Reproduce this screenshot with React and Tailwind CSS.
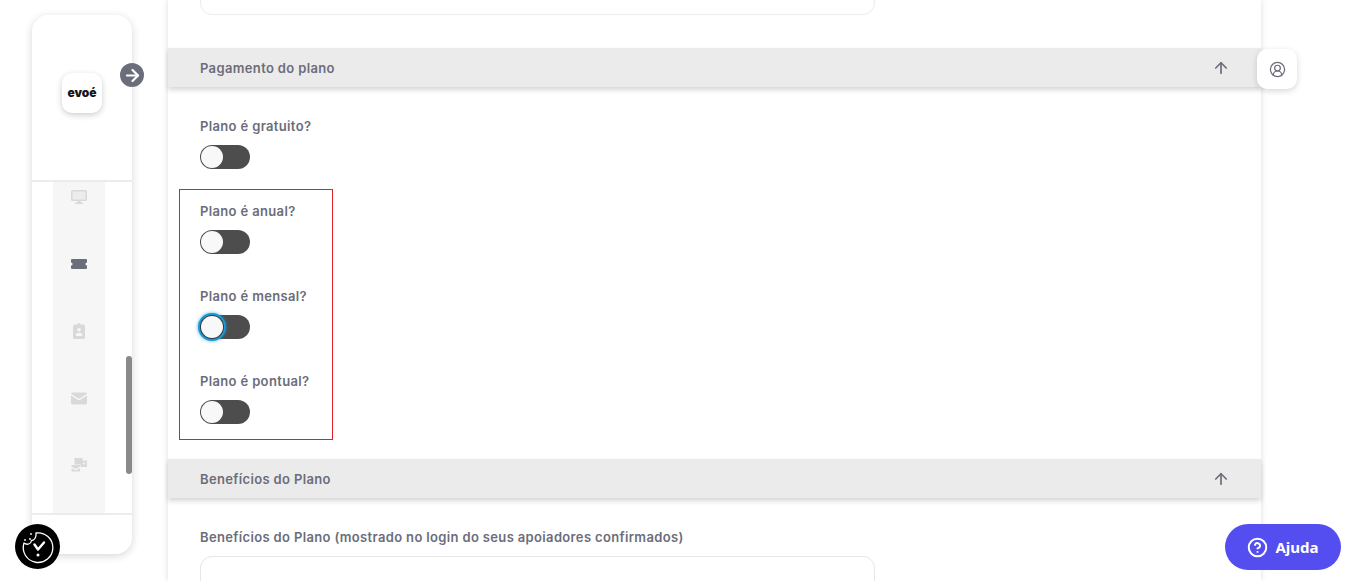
import React from 'react';
import { ArrowRight, ArrowUp, CircleUserRound, CircleHelp } from 'lucide-react';

const labelClass = "font-['Inter',sans-serif] text-[13px] font-semibold tracking-[0.35px] text-[#6b6d7a]";

const SectionHeader = ({ title }) => (
  <div className="flex h-[39px] items-center justify-between bg-[#ebebeb] pl-8 pr-[31px] shadow-[0_3px_5px_rgba(0,0,0,0.16)]">
    <span className={`${labelClass} pt-[3px]`}>{title}</span>
    <ArrowUp size={18} strokeWidth={2.25} className="text-[#6b6d7a]" />
  </div>
);

const Toggle = ({ focused }) => (
  <div className="relative h-6 w-[50px] rounded-full bg-[#4d4d4d]">
    <div
      className={`absolute left-px top-px h-[22px] w-[22px] rounded-full bg-[#f8f8f8] ${
        focused ? 'shadow-[0_0_0_1px_#3a3a3a,0_0_0_3px_#1a97d5,0_0_3px_4px_rgba(26,151,213,0.45)]' : ''
      }`}
    />
  </div>
);

const ToggleField = ({ label, focused }) => (
  <div className="flex flex-col">
    <label className={`${labelClass} h-[16px] leading-[16px]`}>{label}</label>
    <div className="mt-[11px]">
      <Toggle focused={focused} />
    </div>
  </div>
);

const navIcons = [
  <svg key="monitor" viewBox="0 0 16 16" className="h-4 w-4 fill-[#d9d9d9]">
    <path fillRule="evenodd" d="M1.500 1h13A1.500 1.500 0 0 1 16 2.500v8a1.500 1.500 0 0 1-1.500 1.500h-13A1.500 1.500 0 0 1 0 10.500v-8A1.500 1.500 0 0 1 1.500 1zM1.800 2.800v7.400h12.400V2.800z" />
    <path d="M1.800 2.800h12.400v7.400H1.800z" fill="#ececec" />
    <path d="M6.500 12h3l.4 1.500H12V15H4v-1.500h2.100z" />
  </svg>,
  <svg key="ticket" viewBox="0 0 16 16" className="h-4 w-4 fill-[#6b6d7a]">
    <path d="M1 3h14a1 1 0 0 1 1 1v2.400a1.600 1.600 0 0 0 0 3.200V12a1 1 0 0 1-1 1H1a1 1 0 0 1-1-1V9.600a1.600 1.600 0 0 0 0-3.200V4a1 1 0 0 1 1-1z" />
  </svg>,
  <svg key="badge" viewBox="0 0 16 16" className="h-4 w-4 fill-[#d9d9d9]">
    <path fillRule="evenodd" d="M3.500 1.500h2.700a1.900 1.900 0 0 1 3.600 0h2.700A1.500 1.500 0 0 1 14 3v11.500a1.500 1.500 0 0 1-1.500 1.500h-9A1.500 1.500 0 0 1 2 14.500V3a1.500 1.500 0 0 1 1.500-1.500zM8 5a1.800 1.800 0 1 0 0 3.600A1.800 1.800 0 0 0 8 5zM4.800 13h6.400v-1.300c0-1-1.500-1.900-3.200-1.900s-3.200.9-3.200 1.900z" />
  </svg>,
  <svg key="mail" viewBox="0 0 16 16" className="h-4 w-4 fill-[#d9d9d9]">
    <path d="M1.500 2.500h13c.8 0 1.400.5 1.500 1.200L8 8.800 0 3.700c.1-.7.700-1.200 1.500-1.200zM0 5.500v7.500c0 .8.700 1.500 1.500 1.500h13c.8 0 1.500-.7 1.500-1.500V5.500l-8 5z" />
  </svg>,
  <svg key="payments" viewBox="0 0 16 16" className="h-4 w-4 fill-[#d9d9d9]">
    <path d="M3.500 1h8v2.500h4.500v6.500H9.500V7.500h-6z" />
    <path d="M.5 8h8.500v1.600L4.700 12 .5 9.600zM.5 11 4.700 13.400 9 11v3.500H.5z" />
    <circle cx="13" cy="6.500" r="1.100" fill="#f6f6f6" />
  </svg>,
];

const Sidebar = () => (
  <aside className="relative flex h-[539px] w-[100px] flex-col rounded-2xl bg-white shadow-[0_2px_8px_rgba(0,0,0,0.16)]">
    <div className="flex h-[167px] shrink-0 items-center justify-center border-b-2 border-[#ececec] pb-[9px]">
      <div className="flex h-10 w-10 items-center justify-center rounded-[10px] bg-white shadow-[0_2px_6px_rgba(0,0,0,0.2)]">
        <span className="font-['Inter',sans-serif] text-[12px] font-black leading-none text-[#151515]">evoé</span>
      </div>
    </div>
    <div className="relative min-h-0 flex-1 overflow-hidden pl-[21px]">
      <div className="flex h-full w-[52px] flex-col items-center gap-[51px] bg-[#f6f6f6] pt-[7px]">
        {navIcons.map((icon) => icon)}
      </div>
      <div className="absolute right-0 top-[174px] h-[118px] w-[6px] rounded-full bg-[#8a8a8a]" />
    </div>
    <div className="h-[41px] shrink-0 border-t-2 border-[#ececec]" />
    <button className="absolute left-[88px] top-[48px] flex h-6 w-6 items-center justify-center rounded-full bg-[#6b6d7a] text-white">
      <ArrowRight size={19} strokeWidth={2.75} />
    </button>
  </aside>
);

const CookieBadge = () => (
  <div className="absolute bottom-[12px] left-[15px] h-[45px] w-[45px] rounded-full bg-black">
    <svg viewBox="0 0 45 45" className="h-[45px] w-[45px]" fill="none" stroke="white" strokeWidth="1.300" strokeLinecap="round" strokeLinejoin="round">
      <path d="M21 9A14.800 14.800 0 1 1 9 19C12 21.500 16 20 16.500 16.500 19.500 16.500 21.500 13 21 9z" />
      <path d="M19.500 20.500l3.500 5 6-7" strokeWidth="2.400" />
      <path d="M23 31v.1" strokeWidth="3" />
      <path d="M16 10v.1M10 16v.1M15 15v.1" strokeWidth="1.800" />
    </svg>
  </div>
);

const App = () => (
  <div className="relative flex h-[581px] w-full overflow-hidden bg-white">
    <div className="w-[168px] shrink-0 pl-8 pt-[15px]">
      <Sidebar />
    </div>

    <main className="w-[1093px] shrink-0 shadow-[0_0_6px_rgba(0,0,0,0.14)]">
      <div className="ml-8 -mt-[10px] h-[25px] w-[675px] rounded-xl border border-[#ececec]" />

      <div className="mt-[33px]">
        <SectionHeader title="Pagamento do plano" />
      </div>

      <div className="pl-8 pt-[31px]">
        <ToggleField label="Plano é gratuito?" />
      </div>

      <div className="ml-[11px] mt-5 flex h-[251px] w-[154px] flex-col gap-[34px] border border-[#e01f26] pl-5 pt-[13px]">
        <ToggleField label="Plano é anual?" />
        <ToggleField label="Plano é mensal?" focused />
        <ToggleField label="Plano é pontual?" />
      </div>

      <div className="mt-[19px]">
        <SectionHeader title="Benefícios do Plano" />
      </div>

      <div className="pl-8 pt-[31px]">
        <label className={`${labelClass} block h-[16px] leading-[16px]`}>
          Benefícios do Plano (mostrado no login do seus apoiadores confirmados)
        </label>
        <div className="mt-[11px] h-12 w-[675px] rounded-xl border border-[#e6e6e6]" />
      </div>
    </main>

    <button className="absolute left-[1257px] top-[49px] flex h-10 w-10 items-center justify-center rounded-[10px] bg-white text-[#6b6d7a] shadow-[0_2px_6px_rgba(0,0,0,0.16)]">
      <CircleUserRound size={17} strokeWidth={1.75} />
    </button>

    <CookieBadge />

    <button className="absolute left-[1225px] top-[524px] flex h-[46px] w-[116px] items-center justify-center gap-[7px] rounded-full bg-[#544ef0] text-white">
      <CircleHelp size={21} strokeWidth={2.25} />
      <span className="font-['Noto_Sans',sans-serif] text-[15px] font-bold">Ajuda</span>
    </button>
  </div>
);

export default App;
